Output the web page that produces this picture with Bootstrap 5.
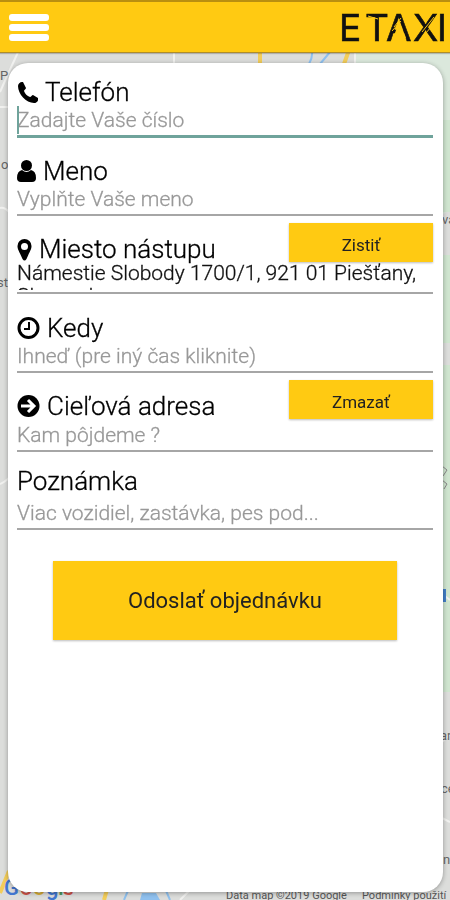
<!DOCTYPE html>
<html lang="sk">
<head>
<meta charset="utf-8">
<meta name="viewport" content="width=device-width, initial-scale=1">
<title>ETAXI</title>
<link href="https://cdn.jsdelivr.net/npm/bootstrap@5.3.0/dist/css/bootstrap.min.css" rel="stylesheet">
<style>
  :root { --taxi: #ffca12; --line: #a6a6a6; --focus: #6fa39b; }
  body { font-family: Roboto, "Noto Sans", sans-serif; color: #111; background: #dcdddb; }
  .map-bg { z-index: -1; }
  .topbar { height: 53px; background: var(--taxi); border-top: 2px solid #b98f10; border-bottom: 1px solid #b08d28; box-shadow: 0 1px 1px #0003; }
  .menu-btn { line-height: 0; }
  .order-card { border-radius: 20px; box-shadow: 0 1px 5px #0005; margin: 10px 7px 8px 8px; padding: 0 10px 24px 9px; }
  .field { min-height: 78px; border-bottom: 2px solid var(--line); }
  .field-first { min-height: 75px; border-bottom: 3px solid var(--focus); }
  .field-tall { min-height: 79px; }
  .field label { font-size: 26px; line-height: 26px; font-weight: 300; gap: 7px; color: #000; -webkit-text-stroke: .3px #000; }
  .field svg { fill: #000; }
  .entry { height: 30px; font-size: 21px; line-height: 23px; font-weight: 300; -webkit-text-stroke: .3px; outline: 0; color: #111; resize: none; }
  .entry::placeholder { color: #989898; opacity: 1; }
  .entry-address { height: 28px; margin-bottom: 2px; }
  .entry-target { height: 31px; }
  .caret { width: 2px; height: 28px; bottom: 1px; left: 0; background: var(--focus); }
  .btn-taxi { --bs-btn-bg: var(--taxi); --bs-btn-color: #222; --bs-btn-hover-bg: #f2bd00; --bs-btn-border-width: 0; --bs-btn-border-radius: 0; box-shadow: 0 1px 2px #0004; }
  .btn-mini { width: 144px; height: 39px; font-size: 17px; line-height: 20px; padding: 5px 0 0; margin-top: 7px; }
  .btn-send { height: 79px; font-size: 22px; margin: 31px 36px 0; }
</style>
</head>
<body class="min-vh-100 d-flex flex-column overflow-hidden">
<svg class="map-bg position-fixed top-0 start-0 w-100 h-100" viewBox="0 0 450 900" preserveAspectRatio="xMidYMid slice" aria-hidden="true">
  <rect width="450" height="900" fill="#dcdddb"/>
  <path d="M356 50h94v160l-8 5V130H356z" fill="#dbe8dc"/>
  <path d="M440 120h10v92h-10zM440 255h10v88h-10zM440 365h10v327h-10z" fill="#cfe5cf"/>
  <g fill="none" stroke="#f1f1ef" stroke-width="2">
    <path d="M19 50L8 74 0 92M0 107h10M0 208q5-1 9 4M0 484q5-2 9-6M355 50v14M174 50v14M442 742l8-8M442 818l8 4M442 594l8 6M180 900l14-14"/>
  </g>
  <g fill="none" stroke="#f3cd59" stroke-width="4"><path d="M260 50v14M349 50l-5 14M104 900l4-14M0 893l9-22"/></g>
  <g fill="none" stroke="#8fc0ee" stroke-width="2"><path d="M312 50q1 7-3 14M330 52l-10 12M124 900l6-14M170 900l-6-14"/></g>
  <path d="M142 893h14l4 7h-20z" fill="#8fc0ee"/>
  <path d="M441 589h5v13h-5z" fill="#437fc8"/>
  <g font-family="Roboto, sans-serif" font-size="13" fill="#666">
    <text x="0" y="80">P</text><text x="1" y="169">o</text><text x="-3" y="287">st</text>
    <text x="442" y="224">va</text><text x="440" y="740">ar</text><text x="441" y="793">ce</text><text x="443" y="864">n</text>
  </g>
  <path d="M442 466l5 4-4 6M442 480l5 4-3 5" fill="none" stroke="#888"/>
  <g font-family="Roboto, sans-serif" font-size="22" font-weight="500">
    <text x="4" y="895" fill="#4277d0">G</text><text x="20" y="895" fill="#d05348">o</text><text x="33" y="895" fill="#d9ae35">o</text><text x="46" y="895" fill="#4277d0">g</text><text x="58" y="895" fill="#4d9a5b">l</text><text x="62" y="895" fill="#d05348">e</text>
  </g>
  <g font-family="Roboto, sans-serif" font-size="11" fill="#555"><text x="226" y="899">Data map ©2019 Google</text><text x="362" y="899">Podmínky použití</text></g>
</svg>

<header class="topbar d-flex justify-content-between align-items-center flex-shrink-0">
  <button type="button" class="menu-btn btn border-0 p-0 ms-2" aria-label="Menu">
    <svg width="42" height="30" viewBox="0 0 42 30" fill="#fff"><rect x="1" y="2" width="40" height="7" rx="3"/><rect x="1" y="12" width="40" height="7" rx="3"/><rect x="1" y="22" width="40" height="7" rx="3"/></svg>
  </button>
  <svg width="110" height="36" viewBox="0 0 110 36" role="img" aria-label="ETAXI">
    <text x="-1 25 46 73 97" y="32" font-family="Inter, sans-serif" font-size="37" fill="#111" stroke="#111" stroke-width=".6">ETAXI</text>
    <path d="M59.500 12L66 29H53z" fill="#ffca12"/>
    <g stroke="#ffca12" stroke-width="1"><path d="M28 7l10 3M54 18l7-9M52 22l9-10M82 23l12-15M86 24l10-12"/></g>
  </svg>
</header>

<main class="order-card bg-white flex-grow-1">
  <form>
    <div class="field field-first d-flex flex-column justify-content-end position-relative">
      <label for="phone" class="d-flex align-items-center">
        <svg width="21" height="21" viewBox="0 0 21 21"><path d="M1 4C1 2 3 0 5 0l1 0 3 6c0 1-2 2-2 3 1 3 3 5 6 6 1 0 2-2 3-2l5 3c1 2-1 5-4 5C9 21 1 12 1 4z"/></svg>Telefón</label>
      <input id="phone" type="tel" class="entry border-0 bg-transparent p-0 w-100" placeholder="Zadajte Vaše číslo">
      <span class="caret position-absolute"></span>
    </div>
    <div class="field d-flex flex-column justify-content-end">
      <label for="fullname" class="d-flex align-items-center">
        <svg width="19" height="24" viewBox="0 0 19 24"><circle cx="9.500" cy="6.500" r="5.500"/><path d="M5 11q4.500 4 9 0 5 1 5 8 0 4-4 4H4q-4 0-4-4 0-7 5-8z"/></svg>Meno</label>
      <input id="fullname" type="text" class="entry border-0 bg-transparent p-0 w-100" placeholder="Vyplňte Vaše meno">
    </div>
    <div class="field d-flex flex-column justify-content-end">
      <div class="d-flex justify-content-between align-items-end">
        <label for="pickup" class="d-flex align-items-center">
          <svg width="15" height="23" viewBox="0 0 15 23"><path fill-rule="evenodd" d="M7.500 1A7 7 0 0 0 .5 8c0 3 1 4 5 13q2 3 4 0c4-9 5-10 5-13a7 7 0 0 0-7-7zm0 4a3.500 3.500 0 1 1 0 7 3.500 3.500 0 0 1 0-7z"/></svg>Miesto nástupu</label>
        <button type="button" class="btn btn-taxi btn-mini">Zistiť</button>
      </div>
      <textarea id="pickup" class="entry entry-address border-0 bg-transparent p-0 w-100 overflow-hidden">Námestie Slobody 1700/1, 921 01 Piešťany, Slovensko</textarea>
    </div>
    <div class="field field-tall d-flex flex-column justify-content-end">
      <label for="when" class="d-flex align-items-center">
        <svg width="23" height="24" viewBox="0 0 23 24"><circle cx="11.500" cy="12" r="9.500" fill="none" stroke="#000" stroke-width="3"/><path d="M12 6v7H7" fill="none" stroke="#000" stroke-width="2"/></svg>Kedy</label>
      <input id="when" type="text" class="entry border-0 bg-transparent p-0 w-100" placeholder="Ihneď (pre iný čas kliknite)">
    </div>
    <div class="field field-tall d-flex flex-column justify-content-end">
      <div class="d-flex justify-content-between align-items-end">
        <label for="target" class="d-flex align-items-center">
          <svg width="23" height="24" viewBox="0 0 23 24"><circle cx="11.500" cy="12" r="11"/><path d="M4 12h12M11 6l6 6-6 6" fill="none" stroke="#fff" stroke-width="3"/></svg>Cieľová adresa</label>
        <button type="button" class="btn btn-taxi btn-mini">Zmazať</button>
      </div>
      <input id="target" type="text" class="entry entry-target border-0 bg-transparent p-0 w-100" placeholder="Kam pôjdeme ?">
    </div>
    <div class="field d-flex flex-column justify-content-end">
      <label for="note" class="d-flex align-items-center pb-1">Poznámka</label>
      <input id="note" type="text" class="entry border-0 bg-transparent p-0 w-100" placeholder="Viac vozidiel, zastávka, pes pod...">
    </div>
    <div class="d-grid"><button type="submit" class="btn btn-taxi btn-send">Odoslať objednávku</button></div>
  </form>
</main>
<script src="https://cdn.jsdelivr.net/npm/bootstrap@5.3.0/dist/js/bootstrap.bundle.min.js"></script>
</body>
</html>
